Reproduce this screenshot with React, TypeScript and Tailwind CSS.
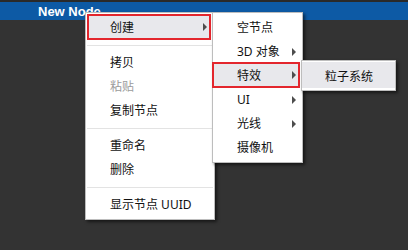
const font = { fontFamily: '"Noto Sans", "Noto Sans CJK SC", sans-serif' };

function Arrow({ className = "" }: { className?: string }) {
  return (
    <span
      className={`absolute top-1/2 -translate-y-1/2 h-0 w-0 border-y-[4px] border-l-[4px] border-y-transparent border-l-[#4d4d4d] ${className}`}
    />
  );
}

function Item({ label, arrow, disabled }: { label: string; arrow?: boolean; disabled?: boolean }) {
  return (
    <div className={`relative flex h-[24px] items-center pl-[24px] ${disabled ? "text-[#9b9b9b]" : "text-[#111]"}`}>
      {label}
      {arrow && <Arrow className="right-[6px]" />}
    </div>
  );
}

function Separator() {
  return <div className="mx-[1px] my-[5px] h-px bg-[#e3e3e3]" />;
}

export default function App() {
  return (
    <div className="relative h-[250px] w-[408px] overflow-hidden bg-[#333333] text-[12px]" style={font}>
      <div className="h-[2px] bg-[#2a2a2a]" />
      <div className="flex h-[18px] items-center bg-[#0d5aa5] pl-[38px] pt-[1px] text-[13px] font-bold text-white" style={{ fontFamily: '"Liberation Sans", Arial, sans-serif' }}>
        New Node
      </div>

      {/* main context menu */}
      <div className="absolute left-[85px] top-[12px] h-[208px] w-[130px] border border-[#bdbdbd] bg-white pt-[1px] shadow-[2px_2px_3px_rgba(0,0,0,0.55)]">
        <div className="relative ml-[1px] mr-[3px] flex h-[26px] items-center border-2 border-[#e3262d] bg-[#e8e8ec] pl-[21px] pt-[1px] text-[#111]">
          创建
          <Arrow className="right-[2px]" />
        </div>
        <Separator />
        <Item label="拷贝" />
        <Item label="粘贴" disabled />
        <Item label="复制节点" />
        <Separator />
        <Item label="重命名" />
        <Item label="删除" />
        <Separator />
        <Item label="显示节点 UUID" />
      </div>

      {/* create submenu */}
      <div className="absolute left-[212px] top-[12px] h-[151px] w-[91px] border border-[#bdbdbd] bg-white pt-[3px] shadow-[2px_2px_3px_rgba(0,0,0,0.55)]">
        <Item label="空节点" />
        <Item label="3D 对象" arrow />
        <div className="relative -ml-[1px] mr-[2px] -mt-[2px] flex h-[26px] items-center border-2 border-[#e3262d] bg-[#e8e8ec] pl-[23px] pt-[2px] text-[#111]">
          特效
          <Arrow className="right-[2px]" />
        </div>
        <Item label="UI" arrow />
        <Item label="光线" arrow />
        <Item label="摄像机" />
      </div>

      {/* effects submenu */}
      <div className="absolute left-[301px] top-[60px] h-[31px] w-[95px] border border-[#bdbdbd] bg-white pt-[1px] shadow-[2px_2px_3px_rgba(0,0,0,0.55)]">
        <div className="flex h-[26px] items-center bg-[#e8e8ec] pl-[23px] pt-[3px] text-[#111]">粒子系统</div>
      </div>
    </div>
  );
}
